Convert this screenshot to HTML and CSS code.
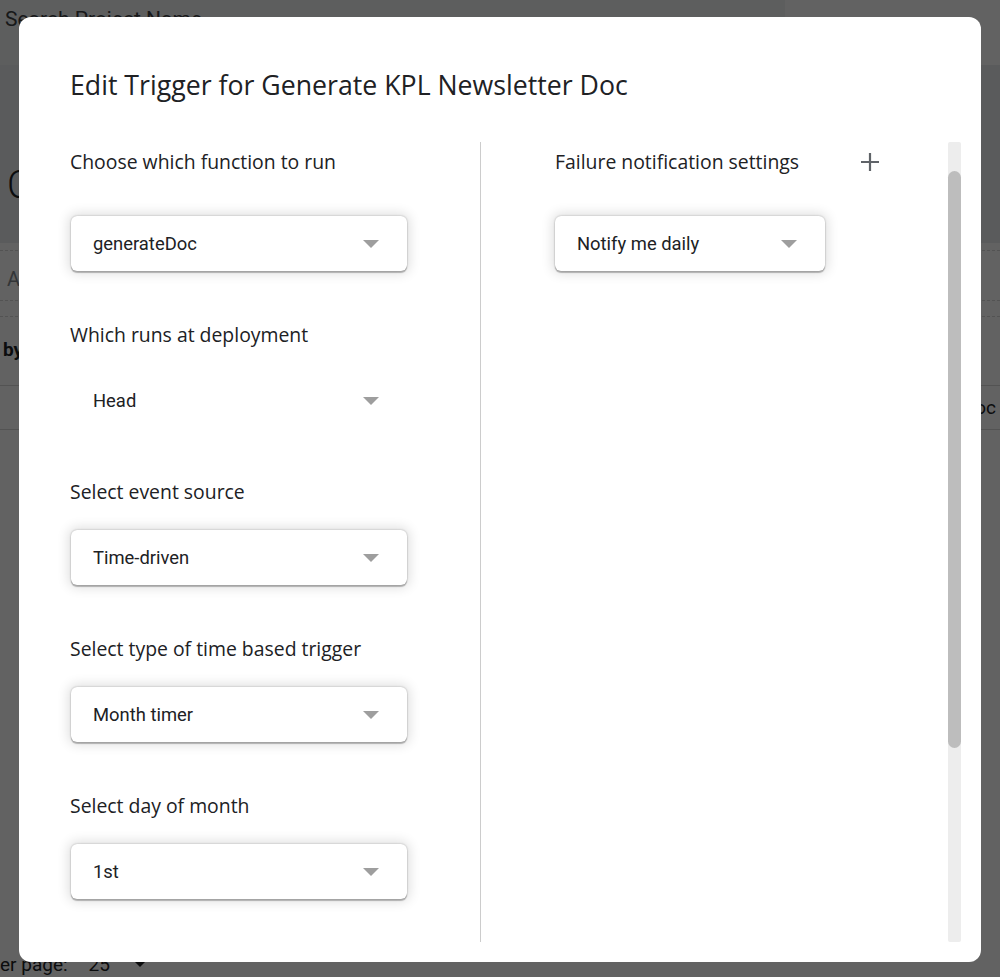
FILE: index.html
```html
<!DOCTYPE html>
<html lang="en">

<head>
    <meta charset="UTF-8">
    <title>Edit Trigger</title>
    <link rel="stylesheet" href="styles.css">
</head>

<body>
    <!-- page behind the dialog -->
    <div class="page">
        <div class="topbar"><span class="search">Search Project Name</span></div>
        <div class="hero"><span class="hero-icon">C</span></div>
        <div class="filter"><span class="filter-text">A</span></div>
        <div class="gap-row"></div>
        <div class="thead"><span class="thead-text">by</span></div>
        <div class="row"><span class="row-text">Doc</span></div>
        <div class="pager">
            <span>er page:</span>
            <span class="pager-num">25</span>
            <span class="pager-arrow"></span>
        </div>
    </div>

    <div class="scrim"></div>

    <div class="dialog">
        <h2 class="dialog-title">Edit Trigger for Generate KPL Newsletter Doc</h2>
        <div class="dialog-body">
            <div class="col col-left">
                <div class="field field-first">
                    <div class="field-label">Choose which function to run</div>
                    <div class="select raised"><span>generateDoc</span><i class="caret"></i></div>
                </div>
                <div class="field">
                    <div class="field-label">Which runs at deployment</div>
                    <div class="select"><span>Head</span><i class="caret"></i></div>
                </div>
                <div class="field">
                    <div class="field-label">Select event source</div>
                    <div class="select raised"><span>Time-driven</span><i class="caret"></i></div>
                </div>
                <div class="field">
                    <div class="field-label">Select type of time based trigger</div>
                    <div class="select raised"><span>Month timer</span><i class="caret"></i></div>
                </div>
                <div class="field">
                    <div class="field-label">Select day of month</div>
                    <div class="select raised"><span>1st</span><i class="caret"></i></div>
                </div>
            </div>
            <div class="col col-right">
                <div class="field field-first">
                    <div class="field-label label-row">
                        <span>Failure notification settings</span>
                        <svg class="plus" width="20" height="20" viewBox="0 0 20 20">
                            <path d="M10 1v18M1 10h18" stroke="#5f6368" stroke-width="2.2" fill="none" />
                        </svg>
                    </div>
                    <div class="select raised narrow"><span>Notify me daily</span><i class="caret"></i></div>
                </div>
            </div>
            <div class="scrollbar">
                <div class="thumb"></div>
            </div>
        </div>
    </div>
</body>

</html>
```

FILE: styles.css
```css
body {
    margin: 0;
    padding: 0;
    font-family: Roboto, "Liberation Sans", sans-serif;
    color: #202124;
    background: #f4f4f4;
    overflow: hidden;
}

/* page behind the dialog */
.page {
    height: 977px;
    display: flex;
    flex-direction: column;
}

.topbar {
    height: 65px;
    width: 785px;
    background: #e8eaec;
    box-sizing: border-box;
    padding: 7px 0 0 5px;
}

.search {
    font-size: 21px;
    color: #3c4043;
}

.hero {
    height: 178px;
    background: #e2e4e6;
    box-sizing: border-box;
    padding: 98px 0 0 7px;
}

.hero-icon {
    font-size: 38px;
    color: #202124;
    font-weight: 300;
}

.filter {
    margin-top: 7px;
    height: 50px;
    border-top: 1px dashed #cfcfcf;
    box-sizing: border-box;
    padding: 16px 0 0 7px;
}

.filter-text {
    font-size: 20px;
    color: #80868b;
}

.gap-row {
    height: 16px;
    border-top: 1px dashed #cfcfcf;
    box-sizing: border-box;
}

.thead {
    height: 69px;
    border-top: 1px dashed #cfcfcf;
    box-sizing: border-box;
    padding: 21px 0 0 3px;
}

.thead-text {
    font-size: 19px;
    font-weight: bold;
}

.row {
    height: 45px;
    border-top: 1px solid #d0d0d0;
    border-bottom: 1px solid #d0d0d0;
    box-sizing: border-box;
    display: flex;
    justify-content: flex-end;
    align-items: center;
    padding-right: 4px;
    font-size: 19px;
}

.pager {
    margin-top: auto;
    height: 26px;
    display: flex;
    align-items: center;
    font-size: 19px;
    color: #202124;
}

.pager-num {
    margin-left: 21px;
}

.pager-arrow {
    margin-left: 25px;
    border-left: 5px solid transparent;
    border-right: 5px solid transparent;
    border-top: 5px solid #202124;
}

/* dark layer over the page */
.scrim {
    position: fixed;
    left: 0;
    top: 0;
    width: 100%;
    height: 100%;
    background-color: rgba(0, 0, 0, 0.6);
}

/* dialog */
.dialog {
    position: fixed;
    left: 19px;
    top: 17px;
    width: 962px;
    height: 945px;
    box-sizing: border-box;
    padding: 52px 20px 20px 51px;
    background: #fff;
    border-radius: 12px;
    display: flex;
    flex-direction: column;
}

.dialog-title {
    margin: 0;
    font-family: "Open Sans", sans-serif;
    font-size: 26.7px;
    line-height: 32px;
    font-weight: 500;
    color: #202124;
}

.dialog-body {
    margin-top: 41px;
    flex: 1;
    min-height: 0;
    display: flex;
}

.col {
    box-sizing: border-box;
    padding-top: 8px;
}

.col-left {
    width: 411px;
    border-right: 1px solid #cccccc;
}

.col-right {
    flex: 1;
    padding-left: 74px;
}

.field {
    margin-bottom: 52px;
}

.field:last-child {
    margin-bottom: 0;
}

.field-label {
    font-family: "Open Sans", sans-serif;
    font-size: 19.4px;
    line-height: 24px;
    color: #202124;
    margin-bottom: 26px;
}

.field-first .field-label {
    margin-bottom: 42px;
}

.label-row {
    width: 325px;
    display: flex;
    justify-content: space-between;
    align-items: center;
}

.select {
    width: 336px;
    height: 55px;
    margin-left: 1px;
    box-sizing: border-box;
    padding: 0 28px 0 22px;
    display: flex;
    align-items: center;
    justify-content: space-between;
    font-size: 18.4px;
    color: #202124;
    border-radius: 6px;
}

.select.raised {
    box-shadow: 0 2px 1px rgba(0, 0, 0, 0.24), 0 0 2px rgba(0, 0, 0, 0.3), 0 0 12px 3px rgba(0, 0, 0, 0.12);
}

.select.narrow {
    width: 270px;
    margin-left: 0;
    padding-right: 28px;
}

.caret {
    display: block;
    width: 0;
    height: 0;
    border-left: 8px solid transparent;
    border-right: 8px solid transparent;
    border-top: 8px solid #9e9e9e;
}

/* fake scrollbar */
.scrollbar {
    width: 13px;
    background: #ededed;
    border-radius: 2px;
}

.thumb {
    margin-top: 29px;
    height: 577px;
    background: #bdbdbd;
    border-radius: 7px;
}
```
